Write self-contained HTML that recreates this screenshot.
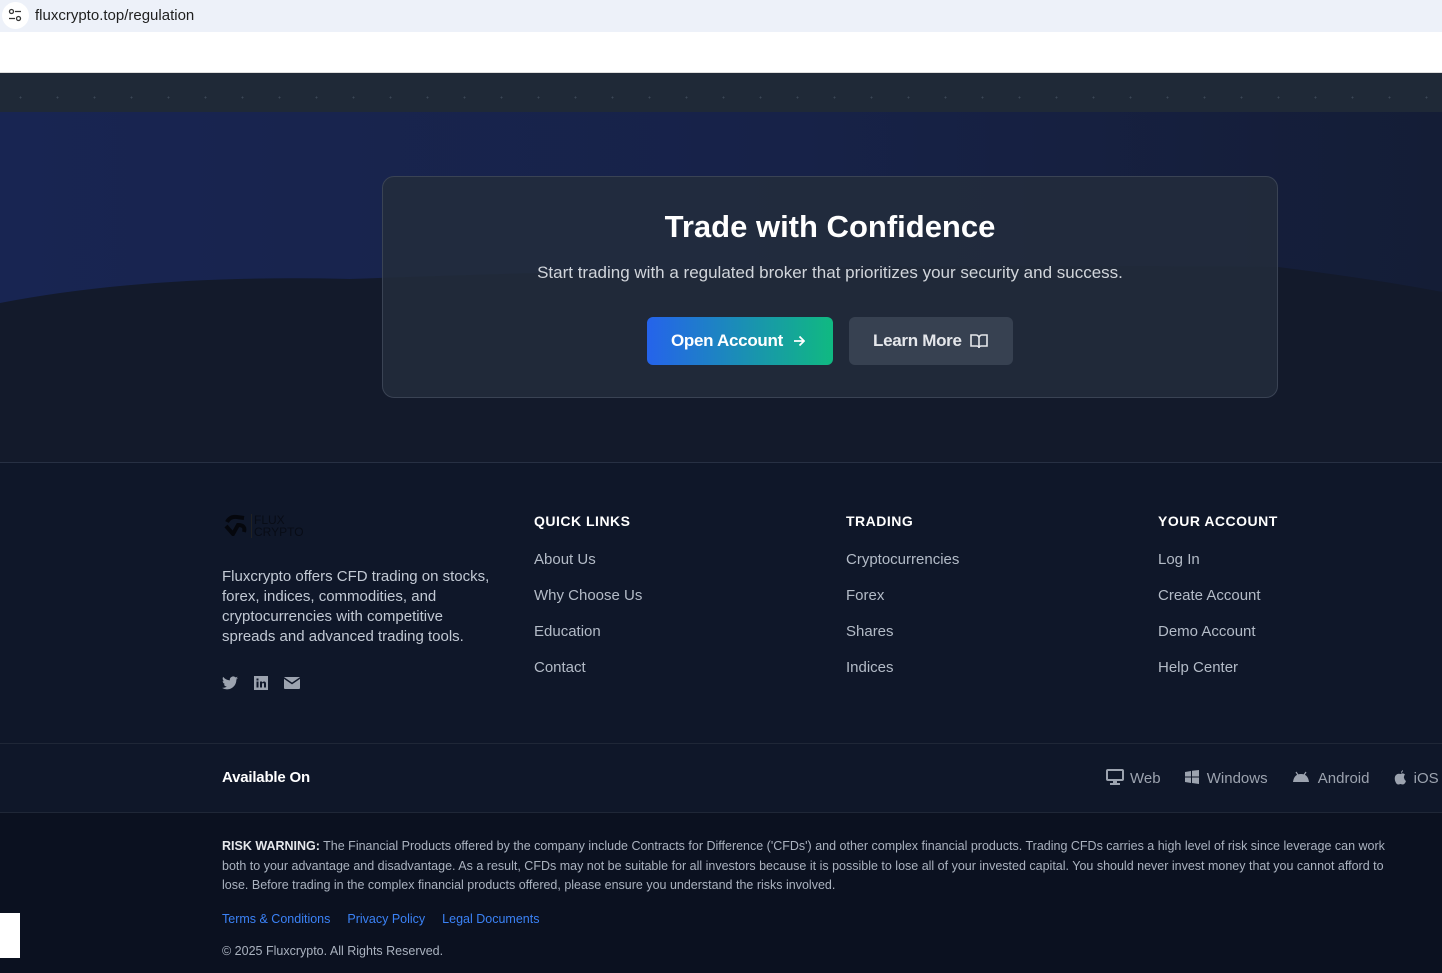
<!DOCTYPE html>
<html><head><meta charset="utf-8"><style>
*{margin:0;padding:0;box-sizing:border-box}
body{width:1442px;height:973px;overflow:hidden;font-family:"Liberation Sans",Arial,sans-serif;background:#0f1729;position:relative}
.abs{position:absolute}
a{text-decoration:none}
</style></head><body>
<div class="abs" style="left:0;top:0;width:1442px;height:32px;background:#edf1f9"></div>
<div class="abs" style="left:2px;top:2px;width:27px;height:27px;border-radius:50%;background:#fff"></div>
<svg class="abs" style="left:8px;top:8px" width="14" height="14" viewBox="0 0 14 14" fill="none" stroke="#333" stroke-width="1.3"><circle cx="3.5" cy="3.5" r="2"/><path d="M7 3.5h6M1 10.5h6"/><circle cx="10.5" cy="10.5" r="2"/></svg>
<div class="abs" style="left:35px;top:7px;font-size:15px;color:#1f1f1f">fluxcrypto.top/regulation</div>
<div class="abs" style="left:0;top:32px;width:1442px;height:41px;background:#fff;border-bottom:1px solid #ddd"></div>
<div class="abs" style="left:0;top:73px;width:1442px;height:39px;background:#1f2937;background-image:radial-gradient(circle,#3b4656 0.8px,transparent 1px);background-size:37px 37px;background-position:2px 6px"></div>
<div class="abs" style="left:0;top:112px;width:1442px;height:351px;background:linear-gradient(90deg,#182552,#172248 55%,#141d36);overflow:hidden">
<svg class="abs" style="left:0;top:0" width="1442" height="351"><path d="M0 191 Q150 162 350 167 Q800 150 1278 155 Q1380 168 1442 180 L1442 351 L0 351Z" fill="#131a2b"/></svg>
</div>
<div class="abs" style="left:0;top:462px;width:1442px;height:1px;background:#273043"></div>
<div class="abs" style="left:382px;top:176px;width:896px;height:222px;border:1px solid #3a4354;border-radius:12px;background:rgba(35,45,60,0.85)"></div>
<div class="abs" style="left:382px;top:209px;width:896px;text-align:center;color:#fff;font-size:31px;font-weight:bold">Trade with Confidence</div>
<div class="abs" style="left:382px;top:263px;width:896px;text-align:center;color:#d1d5db;font-size:17px">Start trading with a regulated broker that prioritizes your security and success.</div>
<div class="abs" style="left:647px;top:317px;width:186px;height:48px;border-radius:6px;background:linear-gradient(90deg,#2563eb,#10b981);color:#fff;font-size:17px;font-weight:bold;line-height:48px;padding-left:24px;letter-spacing:-0.3px">Open Account
<svg class="abs" style="left:146px;top:18px" width="12" height="12" viewBox="0 0 12 12" fill="none" stroke="#fff" stroke-width="1.8"><path d="M1 6h10M6.5 1.5 11 6l-4.5 4.5"/></svg></div>
<div class="abs" style="left:849px;top:317px;width:164px;height:48px;border-radius:6px;background:#374151;color:#e5e7eb;font-size:17px;font-weight:bold;line-height:48px;padding-left:24px;letter-spacing:-0.3px">Learn More
<svg class="abs" style="left:121px;top:16px" width="18" height="16" viewBox="0 0 18 16" fill="none" stroke="#e5e7eb" stroke-width="1.6"><path d="M1 2h5a3 3 0 0 1 3 3v10a2 2 0 0 0-2-2H1zM17 2h-5a3 3 0 0 0-3 3v10a2 2 0 0 1 2-2h6z"/></svg></div>
<div class="abs" style="left:224px;top:514px;font-size:12px;line-height:12px;color:#0a0f1a">
<svg width="24" height="22" viewBox="0 0 24 22" style="position:absolute;left:0;top:0"><path d="M3 8 Q6 2 13 3 L20 4 M2 12 L9 20 L14 11 Q22 11 20 18" stroke="#05070d" stroke-width="4" fill="none"/></svg>
<div style="position:absolute;left:27px;top:0;border-left:1px solid #222;padding-left:2px;color:#080c16">FLUX<br>CRYPTO</div></div>
<div class="abs" style="left:222px;top:567px;width:272px;font-size:15px;line-height:20px;color:#c2c9d4">Fluxcrypto offers CFD trading on stocks, forex, indices, commodities, and cryptocurrencies with competitive spreads and advanced trading tools.</div>
<svg class="abs" style="left:222px;top:676px" width="16" height="14" viewBox="0 0 24 20"><path fill="#9ca3af" d="M24 2.4a10 10 0 0 1-2.8.8A5 5 0 0 0 23.3.4a10 10 0 0 1-3.1 1.2A5 5 0 0 0 11.8 6 14 14 0 0 1 1.7.9a5 5 0 0 0 1.5 6.6A5 5 0 0 1 1 6.9a5 5 0 0 0 3.9 4.8 5 5 0 0 1-2.2.1 5 5 0 0 0 4.6 3.4A10 10 0 0 1 0 17.3 14 14 0 0 0 7.5 19.5c9 0 14-7.5 14-14v-.6A10 10 0 0 0 24 2.4z"/></svg>
<svg class="abs" style="left:254px;top:676px" width="14" height="14" viewBox="0 0 14 14"><rect width="14" height="14" fill="#9ca3af"/><rect x="2.5" y="5.5" width="2" height="6" fill="#0f1729"/><rect x="2.5" y="2.5" width="2" height="2" fill="#0f1729"/><path d="M6 5.5h2v1q1-1.3 2.5-1 1.5.3 1.5 2.5v3.5h-2V8q0-1-.9-1T8 8v3.5H6z" fill="#0f1729"/></svg>
<svg class="abs" style="left:284px;top:677px" width="16" height="12" viewBox="0 0 16 12"><rect width="16" height="12" rx="1" fill="#9ca3af"/><path d="M0 1l8 5.5L16 1" stroke="#0f1729" stroke-width="1.4" fill="none"/></svg>
<div class="abs" style="left:534px;top:513px;color:#fff;font-weight:bold;font-size:14px;letter-spacing:.5px">QUICK LINKS</div>
<div class="abs" style="left:846px;top:513px;color:#fff;font-weight:bold;font-size:14px;letter-spacing:.5px">TRADING</div>
<div class="abs" style="left:1158px;top:513px;color:#fff;font-weight:bold;font-size:14px;letter-spacing:.5px">YOUR ACCOUNT</div>
<div class="abs" style="left:534px;top:542px;font-size:15px;line-height:36px;color:#b3bbc7">About Us<br>Why Choose Us<br>Education<br>Contact</div>
<div class="abs" style="left:846px;top:542px;font-size:15px;line-height:36px;color:#b3bbc7">Cryptocurrencies<br>Forex<br>Shares<br>Indices</div>
<div class="abs" style="left:1158px;top:542px;font-size:15px;line-height:36px;color:#b3bbc7">Log In<br>Create Account<br>Demo Account<br>Help Center</div>
<div class="abs" style="left:0;top:743px;width:1442px;height:1px;background:#1f2737"></div>
<div class="abs" style="left:222px;top:769px;color:#fff;font-weight:bold;font-size:15px;letter-spacing:-0.2px">Available On</div>
<div class="abs" style="left:1106px;top:769px;font-size:15px;color:#9ca3af;white-space:nowrap">
<svg width="18" height="16" viewBox="0 0 18 16" style="vertical-align:-2px"><rect x="1" y="1" width="16" height="10" rx="1" fill="none" stroke="#9ca3af" stroke-width="2"/><rect x="7" y="11" width="4" height="3" fill="#9ca3af"/><rect x="4" y="14" width="10" height="2" fill="#9ca3af"/></svg><span style="margin-left:6px">Web</span>
<span style="display:inline-block;width:20px"></span><svg width="14" height="14" viewBox="0 0 14 14" style="vertical-align:-1px"><path d="M0 2l6-1v5.5H0zM7 .8L14 0v6.5H7zM0 7.5h6V13L0 12zM7 7.5h7V14l-7-1z" fill="#9ca3af"/></svg><span style="margin-left:8px">Windows</span>
<span style="display:inline-block;width:20px"></span><svg width="18" height="12" viewBox="0 0 18 12" style="vertical-align:0"><path d="M1 11Q2 3 9 3t8 8z" fill="#9ca3af"/><path d="M4 1l2 3M14 1l-2 3" stroke="#9ca3af" stroke-width="1.2"/></svg><span style="margin-left:8px">Android</span>
<span style="display:inline-block;width:20px"></span><svg width="13" height="15" viewBox="0 0 13 15" style="vertical-align:-2px"><path d="M6.5 4Q9 2.5 11 4.5 9.5 6 10 8t2 3q-1 3-3 3.5-1 0-2.5-.5-1.5.5-2.5.5Q2 14 1 10.5 0 6 3 4.3 4.5 3.5 6.5 4zM7 3q0-2 2-3 0 2-2 3z" fill="#9ca3af"/></svg><span style="margin-left:7px">iOS</span></div>
<div class="abs" style="left:0;top:812px;width:1442px;height:161px;background:#0b1120;border-top:1px solid #1f2737"></div>
<div class="abs" style="left:222px;top:837px;width:1184px;font-size:12.5px;line-height:19.6px;color:#aab2bf"><b style="color:#e5e7eb">RISK WARNING:</b> The Financial Products offered by the company include Contracts for Difference ('CFDs') and other complex financial products. Trading CFDs carries a high level of risk since leverage can work both to your advantage and disadvantage. As a result, CFDs may not be suitable for all investors because it is possible to lose all of your invested capital. You should never invest money that you cannot afford to lose. Before trading in the complex financial products offered, please ensure you understand the risks involved.</div>
<div class="abs" style="left:222px;top:912px;font-size:12.5px;color:#3b82f6;white-space:nowrap">Terms &amp; Conditions<span style="margin-left:17px">Privacy Policy</span><span style="margin-left:17px">Legal Documents</span></div>
<div class="abs" style="left:222px;top:944px;font-size:12.5px;color:#aab2bf">© 2025 Fluxcrypto. All Rights Reserved.</div>
<div class="abs" style="left:0;top:913px;width:20px;height:45px;background:#fff"></div>
</body></html>
